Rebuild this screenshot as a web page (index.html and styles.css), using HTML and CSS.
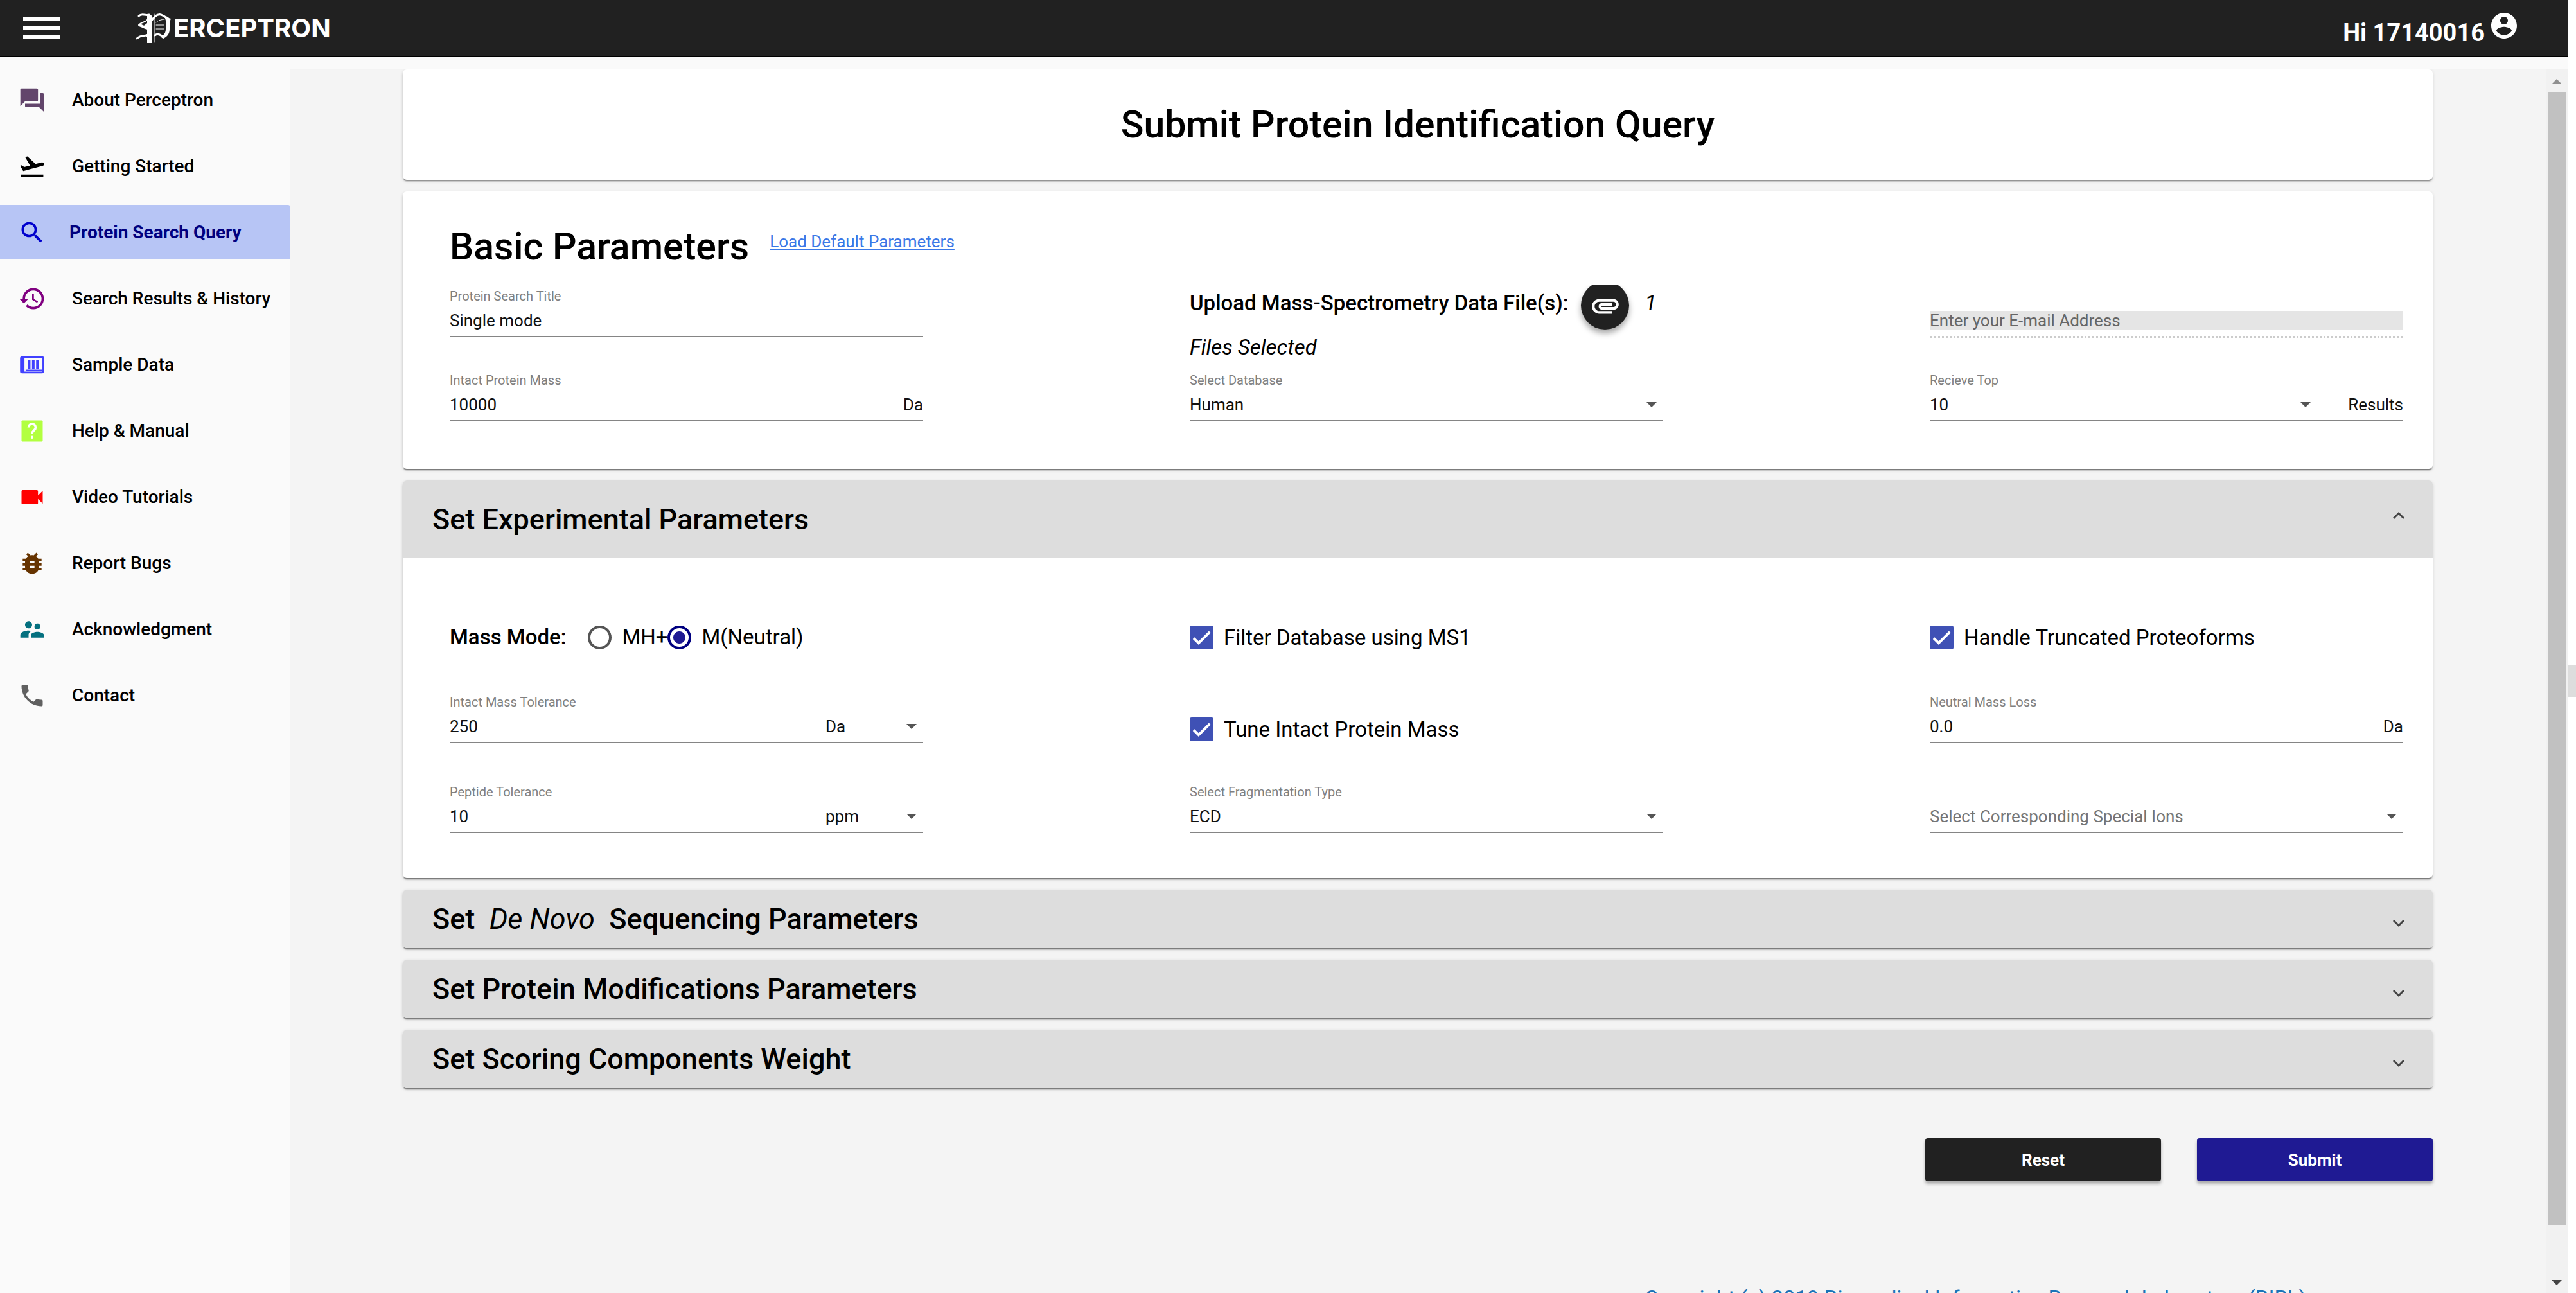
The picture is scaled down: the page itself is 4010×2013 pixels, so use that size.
FILE: index.html
```html
<!DOCTYPE html>
<html lang="en">
<head>
<meta charset="utf-8">
<title>Perceptron - Protein Search Query</title>
<link rel="stylesheet" href="styles.css">
</head>
<body>
<svg class="symbols" aria-hidden="true">
  <symbol id="arrow" viewBox="0 0 16 8"><path d="M0 0h16L8 8z"/></symbol>
  <symbol id="caret" viewBox="0 0 20 26"><path d="M2 15l8 8 8-8" fill="none" stroke="currentColor" stroke-width="3"/></symbol>
</svg>

<header class="topbar">
  <button class="menu-button" type="button" aria-label="Toggle menu"><span></span><span></span><span></span></button>
  <a class="brand" href="#">
    <svg class="brand-mark" viewBox="0 0 56 48" aria-hidden="true">
      <g fill="none" stroke="#fff" stroke-linecap="round">
        <path d="M4 5C9 0 13 5 20 3" stroke-width="3"/>
        <path d="M5 18c5-5 9-2 13-8" stroke-width="2"/>
        <path d="M5 19c4 1 7 4 13 5" stroke-width="4"/>
        <path d="M1 40c7-7 12-3 18-6" stroke-width="3"/>
        <path d="M24 12c6-9 12-11 17-8 3 2 5 3 8 4" stroke-width="3"/>
        <path d="M29 35c4-3 9-1 13 3" stroke-width="3"/>
        <path d="M29 2v44" stroke-width="1"/>
        <path d="M31 15c4-4 8-4 13-5M31 19h12M31 25h12" stroke-width="1"/>
      </g>
      <path d="M44 5c4 3 8 3 10 4-2 4-2 10-2 16 0 7-3 12-10 15-2-1-3-2-4-3 6-3 8-6 8-12V12z" fill="#fff"/>
      <path d="M17 3c3 0 5 0 8 2v42h-8V38l-4-3 4-2V24l-5-4 5-4z" fill="#fff"/>
    </svg>
    <span class="brand-name">ERCEPTRON</span>
  </a>
  <button class="user" type="button">
    <span class="user-name">Hi 17140016</span>
    <svg class="user-icon" viewBox="0 0 24 24" aria-hidden="true"><path d="M12 2C6.480 2 2 6.480 2 12s4.480 10 10 10 10-4.480 10-10S17.520 2 12 2zm0 3c1.660 0 3 1.340 3 3s-1.340 3-3 3-3-1.340-3-3 1.340-3 3-3zm0 14.200c-2.500 0-4.710-1.280-6-3.220.03-1.990 4-3.080 6-3.080 1.990 0 5.970 1.090 6 3.080-1.290 1.940-3.500 3.220-6 3.220z"/></svg>
  </button>
</header>

<div class="shell">
  <nav class="sidebar" aria-label="Main">
    <a class="nav-item" href="#"><svg viewBox="0 0 24 24" fill="#62456b"><path d="M21 6h-2v9H6v2c0 .55.45 1 1 1h11l4 4V7c0-.55-.45-1-1-1zm-4 6V3c0-.55-.45-1-1-1H3c-.55 0-1 .45-1 1v14l4-4h10c.55 0 1-.45 1-1z"/></svg>About Perceptron</a>
    <a class="nav-item" href="#"><svg viewBox="0 0 24 24" fill="#000"><path d="M2.500 19h19v2h-19zm19.570-9.360c-.21-.8-1.040-1.280-1.840-1.060L14.920 10l-6.900-6.430-1.930.51 4.140 7.170-4.970 1.330-1.970-1.540-1.450.39 1.820 3.160.77 1.330 1.600-.43 5.310-1.420 4.350-1.160L21 11.490c.81-.23 1.280-1.050 1.070-1.850z"/></svg>Getting Started</a>
    <a class="nav-item nav-item--active" href="#" aria-current="page"><svg viewBox="0 0 24 24" fill="#0000cd"><path d="M15.500 14h-.79l-.28-.27C15.410 12.590 16 11.110 16 9.500 16 5.910 13.090 3 9.500 3S3 5.910 3 9.500 5.910 16 9.500 16c1.610 0 3.090-.59 4.230-1.570l.27.28v.79l5 4.990L20.490 19l-4.990-5zm-6 0C7.010 14 5 11.990 5 9.500S7.010 5 9.500 5 14 7.010 14 9.500 11.990 14 9.500 14z"/></svg>Protein Search Query</a>
    <a class="nav-item" href="#"><svg viewBox="0 0 24 24" fill="#800080"><path d="M13 3c-4.970 0-9 4.030-9 9H1l3.890 3.890.07.14L9 12H6c0-3.870 3.130-7 7-7s7 3.130 7 7-3.130 7-7 7c-1.930 0-3.680-.79-4.940-2.060l-1.420 1.420C8.270 19.990 10.510 21 13 21c4.970 0 9-4.030 9-9s-4.030-9-9-9zm-1 5v5l4.280 2.540.72-1.210-3.500-2.080V8H12z"/></svg>Search Results &amp; History</a>
    <a class="nav-item" href="#"><svg viewBox="0 0 24 24" fill="none" stroke="#4040ff"><rect x="2.500" y="5.500" width="19" height="13" rx="1" stroke-width="1.500"/><path d="M4 5v14" stroke-width="3"/><path d="M6.500 16.500h14" stroke-width=".8"/><path d="M9.500 8v7.500M13 8v7.500M16.500 8v7.500" stroke-width="2.200"/></svg>Sample Data</a>
    <a class="nav-item" href="#"><svg viewBox="0 0 24 24"><rect x="3" y="3" width="18" height="18" rx="1" fill="#b2ff40"/><path d="M9 9c0-4 6-4 6 0 0 2.500-3 2.500-3 5.200" fill="none" stroke="#fff" stroke-width="2"/><circle cx="12" cy="17.300" r="1.200" fill="#fff"/></svg>Help &amp; Manual</a>
    <a class="nav-item" href="#"><svg viewBox="0 0 24 24" fill="#f00"><path d="M17 10.500V7c0-.55-.45-1-1-1H4c-.55 0-1 .45-1 1v10c0 .55.45 1 1 1h12c.55 0 1-.45 1-1v-3.500l4 4v-11l-4 4z"/></svg>Video Tutorials</a>
    <a class="nav-item" href="#"><svg viewBox="0 0 24 24" fill="#663300"><path d="M20 8h-2.810c-.45-.78-1.070-1.450-1.820-1.960L17 4.410 15.590 3l-2.170 2.170C12.960 5.060 12.490 5 12 5c-.49 0-.96.06-1.410.17L8.410 3 7 4.410l1.620 1.630C7.880 6.550 7.260 7.220 6.810 8H4v2h2.090c-.05.33-.09.66-.09 1v1H4v2h2v1c0 .34.04.67.09 1H4v2h2.810c1.040 1.790 2.970 3 5.190 3s4.150-1.210 5.190-3H20v-2h-2.090c.05-.33.09-.66.09-1v-1h2v-2h-2v-1c0-.34-.04-.67-.09-1H20V8zm-6 8h-4v-2h4v2zm0-4h-4v-2h4v2z"/></svg>Report Bugs</a>
    <a class="nav-item" href="#"><svg viewBox="0 0 24 24" fill="#04707f"><path d="M16.500 12c1.380 0 2.490-1.120 2.490-2.500S17.880 7 16.500 7C15.120 7 14 8.120 14 9.500s1.120 2.500 2.500 2.500zM9 11c1.660 0 2.990-1.340 2.990-3S10.660 5 9 5C7.340 5 6 6.340 6 8s1.340 3 3 3zm7.500 3c-1.830 0-5.500.92-5.500 2.750V19h11v-2.250c0-1.830-3.670-2.750-5.500-2.750zM9 13c-2.330 0-7 1.170-7 3.500V19h7v-2.250c0-.85.33-2.340 2.370-3.470C10.500 13.100 9.660 13 9 13z"/></svg>Acknowledgment</a>
    <a class="nav-item" href="#"><svg viewBox="0 0 24 24" fill="#606060"><path d="M6.620 10.790c1.440 2.830 3.760 5.140 6.590 6.590l2.200-2.200c.27-.27.67-.36 1.020-.24 1.120.37 2.330.57 3.570.57.55 0 1 .45 1 1V20c0 .55-.45 1-1 1-9.390 0-17-7.610-17-17 0-.55.45-1 1-1h3.500c.55 0 1 .45 1 1 0 1.250.2 2.450.57 3.570.11.35.03.74-.25 1.020l-2.200 2.200z"/></svg>Contact</a>
  </nav>

  <main class="content">
    <form class="query" action="#">
      <section class="card card--title"><h1>Submit Protein Identification Query</h1></section>

      <section class="card card--basic">
        <div class="basic-head">
          <h2>Basic Parameters</h2>
          <a class="defaults-link" href="#">Load Default Parameters</a>
        </div>
        <div class="grid">
          <div class="field field--first">
            <label for="title">Protein Search Title</label>
            <div class="field-row"><input id="title" type="text" value="Single mode"></div>
          </div>
          <div class="upload">
            <div class="upload-line">
              <span class="strong">Upload Mass-Spectrometry Data File(s):</span>
              <button class="fab" type="button" aria-label="Attach files"><svg viewBox="0 0 24 24" aria-hidden="true"><path d="M2 12.500C2 9.460 4.460 7 7.500 7H18c2.210 0 4 1.790 4 4s-1.790 4-4 4H9.500C8.120 15 7 13.880 7 12.500S8.120 10 9.500 10H17v2H9.410c-.55 0-.55 1 0 1H18c1.100 0 2-.9 2-2s-.9-2-2-2H7.500C5.570 9 4 10.570 4 12.500S5.570 16 7.500 16H17v2H7.500C4.460 18 2 15.540 2 12.500z"/></svg></button>
              <em>1</em>
            </div>
            <em class="upload-status">Files Selected</em>
          </div>
          <div class="field field--first field--bare field--disabled">
            <div class="field-row"><input type="email" placeholder="Enter your E-mail Address" aria-label="Enter your E-mail Address" disabled></div>
          </div>

          <div class="field">
            <label for="mass">Intact Protein Mass</label>
            <div class="field-row"><input id="mass" type="text" value="10000"><span>Da</span></div>
          </div>
          <div class="field">
            <label for="database">Select Database</label>
            <div class="field-row"><select id="database"><option>Human</option></select><svg class="arrow"><use href="#arrow"/></svg></div>
          </div>
          <div class="field">
            <label for="top">Recieve Top</label>
            <div class="field-row"><select id="top"><option>10</option></select><svg class="arrow arrow--inner"><use href="#arrow"/></svg><span>Results</span></div>
          </div>
        </div>
      </section>

      <section class="card">
        <h2 class="panel-title"><button class="panel-head panel-head--open" type="button" aria-expanded="true"><span>Set Experimental Parameters</span><svg class="caret"><use href="#caret"/></svg></button></h2>
        <div class="grid panel-body">
          <div class="mass-mode" role="radiogroup" aria-labelledby="mode-label">
            <span class="strong" id="mode-label">Mass Mode:</span>
            <label class="option"><input type="radio" name="mode">MH+</label>
            <label class="option"><input type="radio" name="mode" checked>M(Neutral)</label>
          </div>
          <label class="option"><input type="checkbox" checked>Filter Database using MS1</label>
          <label class="option"><input type="checkbox" checked>Handle Truncated Proteoforms</label>

          <div class="field">
            <label for="tolerance">Intact Mass Tolerance</label>
            <div class="field-row"><input id="tolerance" type="text" value="250"><select class="unit" aria-label="Intact mass tolerance unit"><option>Da</option></select><svg class="arrow"><use href="#arrow"/></svg></div>
          </div>
          <label class="option option--low"><input type="checkbox" checked>Tune Intact Protein Mass</label>
          <div class="field">
            <label for="loss">Neutral Mass Loss</label>
            <div class="field-row"><input id="loss" type="text" value="0.0"><span>Da</span></div>
          </div>

          <div class="field">
            <label for="peptide">Peptide Tolerance</label>
            <div class="field-row"><input id="peptide" type="text" value="10"><select class="unit" aria-label="Peptide tolerance unit"><option>ppm</option></select><svg class="arrow"><use href="#arrow"/></svg></div>
          </div>
          <div class="field">
            <label for="fragmentation">Select Fragmentation Type</label>
            <div class="field-row"><select id="fragmentation"><option>ECD</option></select><svg class="arrow"><use href="#arrow"/></svg></div>
          </div>
          <div class="field field--bare">
            <div class="field-row"><select class="empty" aria-label="Select Corresponding Special Ions"><option>Select Corresponding Special Ions</option></select><svg class="arrow"><use href="#arrow"/></svg></div>
          </div>
        </div>
      </section>

      <section class="card"><h2 class="panel-title"><button class="panel-head" type="button" aria-expanded="false"><span>Set &nbsp;<em>De Novo</em>&nbsp; Sequencing Parameters</span><svg class="caret"><use href="#caret"/></svg></button></h2></section>
      <section class="card"><h2 class="panel-title"><button class="panel-head" type="button" aria-expanded="false"><span>Set Protein Modifications Parameters</span><svg class="caret"><use href="#caret"/></svg></button></h2></section>
      <section class="card"><h2 class="panel-title"><button class="panel-head" type="button" aria-expanded="false"><span>Set Scoring Components Weight</span><svg class="caret"><use href="#caret"/></svg></button></h2></section>

      <div class="actions">
        <button class="action" type="reset">Reset</button>
        <button class="action action--primary" type="submit">Submit</button>
      </div>
    </form>
    <footer class="footer">Copyright (c) 2019 Biomedical Informatics Research Laboratory (BIRL)</footer>
  </main>

  <div class="scrollbar" aria-hidden="true">
    <svg class="scroll-arrow scroll-arrow--up" viewBox="0 0 16 8"><path d="M0 8h16L8 0z"/></svg>
    <div class="scroll-track"><div class="scroll-thumb"></div></div>
    <svg class="scroll-arrow" viewBox="0 0 16 8"><path d="M0 0h16L8 8z"/></svg>
  </div>
</div>
<div class="edge-tab"></div>
</body>
</html>
```

FILE: styles.css
```css
* { box-sizing: border-box; }

body {
  margin: 0;
  height: 100vh;
  padding-right: 13px;
  display: flex;
  flex-direction: column;
  overflow: hidden;
  background: #fff;
  color: #000;
  font-family: Roboto, "Liberation Sans", sans-serif;
  font-size: 33px;
}

h1, h2 { margin: 0; font-weight: 500; }

button, input, select {
  margin: 0;
  padding: 0;
  border: 0;
  background: none;
  color: inherit;
  font: inherit;
}

button { cursor: pointer; }

.symbols { position: absolute; width: 0; height: 0; }

/* Top bar */
.topbar {
  flex: none;
  height: 89px;
  padding: 0 75px 0 36px;
  display: flex;
  align-items: center;
  background: #212121;
  border-bottom: 2px solid #000;
  color: #fff;
}

.menu-button {
  width: 58px;
  display: flex;
  flex-direction: column;
  gap: 7px;
}

.menu-button span { width: 100%; height: 7px; background: #fff; }

.brand {
  margin-left: 118px;
  display: flex;
  align-items: center;
  gap: 2px;
  color: inherit;
  text-decoration: none;
}

.brand-mark { width: 56px; height: 48px; }

.brand-name { font: 700 40px/48px Inter, sans-serif; }

.user {
  margin-left: auto;
  height: 68px;
  display: flex;
  align-items: flex-start;
  gap: 6px;
}

.user-name { font-size: 38px; font-weight: 700; line-height: 82px; }

.user-icon { width: 48px; height: 48px; margin-top: 6px; fill: #fff; }

/* Page frame */
.shell {
  flex: 1;
  min-height: 0;
  display: grid;
  grid-template-columns: 452px minmax(0, 1fr) 34px;
  padding-top: 19px;
  background: #fafafa;
}

.sidebar {
  padding-top: 5px;
  display: flex;
  flex-direction: column;
  gap: 18px;
}

.nav-item {
  height: 85px;
  padding-left: 28px;
  display: flex;
  align-items: center;
  gap: 40px;
  border-radius: 0 4px 4px 0;
  color: #000;
  font-size: 28px;
  font-weight: 500;
  text-decoration: none;
}

.nav-item svg { flex: none; width: 44px; height: 44px; }

.nav-item--active {
  gap: 36px;
  background: #b7c5f5;
  color: #000080;
  font-weight: 700;
}

.content {
  min-height: 0;
  overflow: hidden;
  padding: 0 176px 0 175px;
  background: #f4f4f4;
}

.query { display: flex; flex-direction: column; gap: 18px; }

/* Cards */
.card {
  border-radius: 6px;
  background: #fff;
  box-shadow: 0 3px 2px -1px rgba(0, 0, 0, .45), 0 2px 5px rgba(0, 0, 0, .16);
}

.card--title { padding: 52px 0; text-align: center; }

.card--title h1 { font-size: 59px; line-height: 68px; }

.card--basic { padding: 52px 46px 74px 73px; }

.basic-head { margin-bottom: 20px; display: flex; align-items: flex-start; gap: 32px; }

.basic-head h2 { font-size: 59px; line-height: 68px; }

.defaults-link { color: #3b78e7; font-size: 26px; line-height: 52px; }

.grid {
  display: grid;
  grid-template-columns: repeat(3, minmax(0, 1fr));
  gap: 10px 415px;
}

/* Form fields */
.field { color: #111; font-size: 26px; }

.field label {
  display: block;
  margin-bottom: 10px;
  color: #808080;
  font-size: 20px;
  line-height: 26px;
}

.field-row {
  display: flex;
  align-items: center;
  padding-bottom: 9px;
  border-bottom: 2px solid #858585;
  line-height: 30px;
}

.field-row input, .field-row select {
  flex: 1;
  min-width: 0;
  height: 30px;
  line-height: 30px;
  appearance: none;
}

.field-row .unit { flex: 0 0 126px; }

.field-row .empty { color: #757575; }

.field--first { margin-top: 10px; }

.field--bare { padding-top: 36px; }

.field--disabled .field-row { border-bottom: 3px dotted #ccc; }

.field--disabled input { background: #e5e5e5; }

.field--disabled input::placeholder { color: #666; opacity: 1; }

.arrow { width: 16px; height: 8px; margin-right: 10px; fill: #555; }

.arrow--inner { margin-right: 58px; }

.strong { font-weight: 500; }

.upload-line { display: flex; align-items: flex-start; height: 75px; line-height: 68px; }

.upload-line em { margin-left: 24px; }

.upload-status { display: block; line-height: 56px; }

.fab {
  width: 75px;
  height: 75px;
  margin-left: 20px;
  display: grid;
  place-items: center;
  border-radius: 50%;
  background: #212121;
  box-shadow: 0 6px 10px rgba(0, 0, 0, .35);
  clip-path: inset(6px -24px -24px -24px);
}

.fab svg { width: 50px; height: 50px; fill: #fff; }

/* Expansion panels */
.panel-head {
  width: 100%;
  height: 91px;
  padding: 0 43px 0 46px;
  display: flex;
  align-items: center;
  justify-content: space-between;
  border-radius: 6px;
  background: #ddd;
  font-size: 45px;
  font-weight: 500;
}

.panel-head--open { height: 121px; border-radius: 6px 6px 0 0; }

.panel-head em { font-weight: 400; }

.caret { width: 20px; height: 26px; color: #444; }

.panel-head--open .caret { transform: rotate(180deg); }

.panel-title { display: flex; }

.panel-body {
  padding: 104px 46px 70px 73px;
  grid-template-rows: 44px auto auto;
  row-gap: 63px;
}

.mass-mode { display: flex; line-height: 38px; }

.mass-mode .strong { margin-right: 34px; }

.option {
  display: flex;
  align-items: center;
  gap: 16px;
  height: 38px;
}

.option--low { margin-top: 36px; }

.option input {
  flex: none;
  width: 37px;
  height: 37px;
  appearance: none;
}

.option input[type="radio"] { border: 4px solid #555; border-radius: 50%; }

.option input[type="radio"]:checked {
  border-color: #000080;
  background: radial-gradient(circle, #1f1a93 9px, transparent 10px);
}

.option input[type="checkbox"] {
  border-radius: 3px;
  background: #3f51b5 url("data:image/svg+xml,%3Csvg xmlns='http://www.w3.org/2000/svg' viewBox='0 0 24 24'%3E%3Cpath d='M4 12.700 9 17.700 20.300 6.400' fill='none' stroke='white' stroke-width='2.600'/%3E%3C/svg%3E") center / 100%;
}

/* Buttons and footer */
.actions { margin-top: 60px; display: flex; justify-content: flex-end; gap: 56px; }

.action {
  width: 367px;
  height: 67px;
  border-radius: 4px;
  background: #212121;
  box-shadow: 0 4px 5px rgba(0, 0, 0, .3);
  color: #fff;
  font-size: 26px;
  font-weight: 700;
}

.action--primary { background: #1f1a93; }

.footer {
  margin-top: 163px;
  padding-right: 197px;
  color: #1a73b8;
  font-size: 33px;
  line-height: 39px;
  text-align: right;
}

/* Scrollbar */
.scrollbar {
  display: flex;
  flex-direction: column;
  align-items: center;
  padding: 15px 0 12px;
  background: #f1f1f1;
}

.scroll-arrow { flex: none; width: 16px; height: 8px; fill: #444; }

.scroll-arrow--up { fill: #8f8f8f; }

.scroll-track { flex: 1; width: 27px; margin: 12px 0; }

.scroll-thumb { height: 96%; background: #c1c1c1; }

.edge-tab {
  position: absolute;
  top: 1036px;
  right: 0;
  width: 13px;
  height: 49px;
  background: #ddd;
}
```
